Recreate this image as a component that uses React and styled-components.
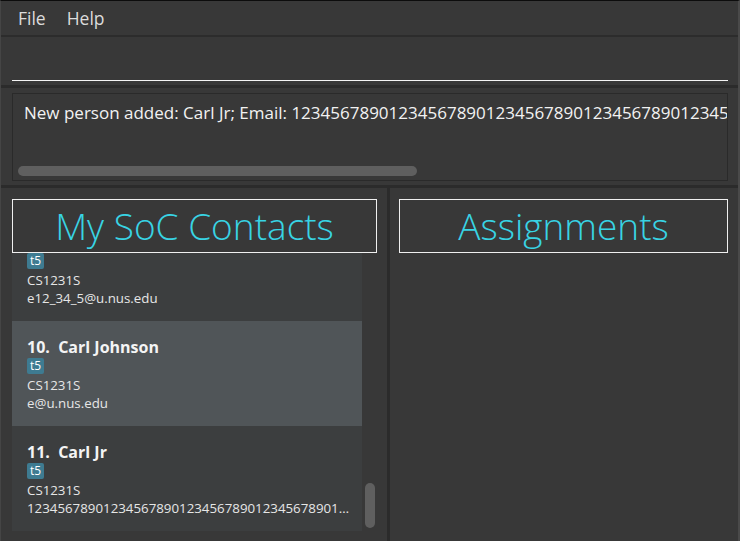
import React from "react";
import styled, { createGlobalStyle } from "styled-components";

const Global = createGlobalStyle`
  html, body { margin: 0; padding: 0; background: #383838; }
  body { width: 740px; height: 541px; overflow: hidden; font-family: "Open Sans", "Noto Sans", sans-serif; }
  * { box-sizing: border-box; }
`;

const Window = styled.div`
  width: 740px;
  height: 541px;
  display: flex;
  flex-direction: column;
  background: #383838;
  border-top: 1px solid #0c0c0c;
  border-left: 1px solid #454545;
  border-right: 2px solid #4a4a4a;
  overflow: hidden;
`;

const MenuBar = styled.div`
  height: 36px;
  flex-shrink: 0;
  display: flex;
  align-items: center;
  gap: 21px;
  padding: 0 0 1px 17px;
  border-bottom: 2px solid #2c2c2c;
`;

const MenuItem = styled.span`
  font-size: 17.5px;
  color: #dcdcdc;
`;

const CommandSection = styled.div`
  height: 51px;
  flex-shrink: 0;
  padding: 0 10px 4px 11px;
  border-bottom: 3px solid #2b2b2b;
`;

const CommandField = styled.div`
  height: 44px;
  border-bottom: 1px solid #f4f4f4;
`;

const ResultSection = styled.div`
  height: 100px;
  flex-shrink: 0;
  padding: 5px 10px 0 11px;
  border-bottom: 3px solid #2b2b2b;
`;

const ResultBox = styled.div`
  height: 88px;
  border: 1px solid #2a2a2a;
  display: flex;
  flex-direction: column;
  padding: 8px 0 4px 0;
  overflow: hidden;
`;

const ResultText = styled.div`
  font-size: 17px;
  line-height: 22px;
  color: #f2f2f2;
  white-space: nowrap;
  overflow: hidden;
  padding-left: 11px;
  flex: 1;
`;

const HScrollThumb = styled.div`
  height: 10px;
  width: 399px;
  margin-left: 5px;
  border-radius: 5px;
  background: #5f5f5f;
`;

const Main = styled.div`
  flex: 1;
  display: flex;
  min-height: 0;
`;

const LeftPanel = styled.div`
  width: 389px;
  display: flex;
  flex-direction: column;
  padding: 11px 10px 10px 11px;
  border-right: 3px solid #2b2b2b;
  flex-shrink: 0;
`;

const RightPanel = styled.div`
  flex: 1;
  display: flex;
  flex-direction: column;
  padding: 11px 10px 0 9px;
`;

const HeaderBox = styled.div`
  height: 54px;
  flex-shrink: 0;
  border: 1px solid #f0f0f0;
  display: flex;
  align-items: center;
  justify-content: center;
  font-size: 37px;
  font-weight: 300;
  color: #38d4e4;
  padding-bottom: 1px;
`;

const ListRow = styled.div`
  flex: 1;
  display: flex;
  min-height: 0;
`;

const ListViewport = styled.div`
  width: 350px;
  display: flex;
  flex-direction: column;
  justify-content: flex-end;
  overflow: hidden;
`;

const VScrollTrack = styled.div`
  width: 15px;
  display: flex;
  flex-direction: column;
  justify-content: flex-end;
  padding: 0 2px 3px 3px;
`;

const VScrollThumb = styled.div`
  height: 45px;
  width: 10px;
  border-radius: 5px;
  background: #5f5f5f;
`;

const Card = styled.div`
  flex-shrink: 0;
  height: 105px;
  padding: 15px 11px 14px 15px;
  background: ${(p) => (p.$selected ? "#505558" : "#3c3e3f")};
  display: flex;
  flex-direction: column;
  overflow: hidden;
`;

const Name = styled.div`
  font-size: 16px;
  font-weight: 700;
  line-height: 22px;
  color: #f4f4f4;
  white-space: pre;
`;

const Tags = styled.div`
  display: flex;
  gap: 4px;
  height: 16px;
`;

const Tag = styled.span`
  height: 16px;
  line-height: 16px;
  padding: 0 3px;
  border-radius: 2px;
  background: #3e7b91;
  color: #ffffff;
  font-size: 12px;
`;

const Detail = styled.div`
  font-size: 13.3px;
  line-height: 18px;
  color: #e6e6e6;
  white-space: nowrap;
  overflow: hidden;
  text-overflow: ellipsis;
  margin-top: ${(p) => (p.$first ? "2px" : "0")};
`;

const longEmail =
  "12345678901234567890123456789012345678901234567890123456789012345678901234567890@u.nus.edu";

const persons = [
  { name: "Alex Yeoh", email: "alexyeoh@u.nus.edu" },
  { name: "Bernice Yu", email: "berniceyu@u.nus.edu" },
  { name: "Charlotte Oliveiro", email: "charlotte@u.nus.edu" },
  { name: "David Li", email: "lidavid@u.nus.edu" },
  { name: "Irfan Ibrahim", email: "irfan@u.nus.edu" },
  { name: "Roy Balakrishnan", email: "royb@u.nus.edu" },
  { name: "Amy Bee", email: "amy@u.nus.edu" },
  { name: "Ben Tan", email: "e12345@u.nus.edu" },
  { name: "Carl Kurz", email: "e12_34_5@u.nus.edu" },
  { name: "Carl Johnson", email: "e@u.nus.edu", selected: true },
  { name: "Carl Jr", email: longEmail },
];

export default function App() {
  return (
    <>
      <Global />
      <Window>
        <MenuBar>
          <MenuItem>File</MenuItem>
          <MenuItem>Help</MenuItem>
        </MenuBar>
        <CommandSection>
          <CommandField />
        </CommandSection>
        <ResultSection>
          <ResultBox>
            <ResultText>
              New person added: Carl Jr; Email: {longEmail}; Tags: [t5]; Course: CS1231S
            </ResultText>
            <HScrollThumb />
          </ResultBox>
        </ResultSection>
        <Main>
          <LeftPanel>
            <HeaderBox>My SoC Contacts</HeaderBox>
            <ListRow>
              <ListViewport>
                {persons.map((p, i) => (
                  <Card key={i} $selected={p.selected}>
                    <Name>{`${i + 1}.  ${p.name}`}</Name>
                    <Tags>
                      <Tag>t5</Tag>
                    </Tags>
                    <Detail $first>CS1231S</Detail>
                    <Detail>{p.email}</Detail>
                  </Card>
                ))}
              </ListViewport>
              <VScrollTrack>
                <VScrollThumb />
              </VScrollTrack>
            </ListRow>
          </LeftPanel>
          <RightPanel>
            <HeaderBox>Assignments</HeaderBox>
          </RightPanel>
        </Main>
      </Window>
    </>
  );
}
